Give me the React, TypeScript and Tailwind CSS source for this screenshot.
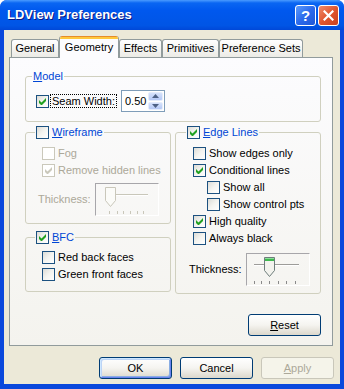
import type { ReactNode } from "react";

function Check({ checked = false, disabled = false }: { checked?: boolean; disabled?: boolean }) {
  return (
    <span
      className={
        disabled
          ? "flex h-[13px] w-[13px] shrink-0 items-center justify-center border border-[#CAC8BB] bg-white"
          : "flex h-[13px] w-[13px] shrink-0 items-center justify-center border border-[#1C5180] bg-gradient-to-br from-[#DCDCD7] via-[#F4F4F0] to-white"
      }
    >
      {checked && (
        <svg width="7" height="7" viewBox="0 0 7 7">
          <path d="M0 2v3l2 2h1l4-4V0L2.5 4.5Z" fill={disabled ? "#CAC8BB" : "#21A121"} />
        </svg>
      )}
    </span>
  );
}

function CheckRow({
  label,
  checked,
  disabled,
  indent,
}: {
  label: ReactNode;
  checked?: boolean;
  disabled?: boolean;
  indent?: boolean;
}) {
  return (
    <div className={`flex h-[17px] items-center gap-[3px] ${indent ? "pl-[14px]" : ""}`}>
      <Check checked={checked} disabled={disabled} />
      <span className={disabled ? "text-[#ACA899]" : ""}>{label}</span>
    </div>
  );
}

function CheckLegend({ label, checked }: { label: ReactNode; checked?: boolean }) {
  return (
    <span className="flex h-[13px] items-center gap-[3px]">
      <Check checked={checked} />
      <span className="text-[#0046D5]">{label}</span>
    </span>
  );
}

// trackbar drawn inside a sunken frame
function Slider({ disabled, thumb, ticks, track }: { disabled?: boolean; thumb: number; ticks: number[]; track: [number, number] }) {
  const line = disabled ? "#C9C7BA" : "#9D9C99";
  const edge = disabled ? "#C9C7BA" : "#6E7D7B";
  return (
    <div className="h-[33px] w-[64px] border border-[#A7A6AA] border-r-white border-b-white">
      <svg width="62" height="31" viewBox="0 0 62 31">
        <line x1={track[0]} y1="10.5" x2={track[1]} y2="10.5" stroke={line} />
        <line x1={track[0]} y1="11.5" x2={track[1]} y2="11.5" stroke="#FFFFFF" />
        {ticks.map((t) => (
          <line key={t} x1={t + 0.5} y1="27" x2={t + 0.5} y2="30" stroke={disabled ? "#C9C7BA" : "#8A8A8A"} />
        ))}
        <path
          d={`M${thumb + 0.5} 3.5h10v13l-5 6l-5-6z`}
          fill={disabled ? "#FBFBF8" : "#F3F3EE"}
          stroke={edge}
        />
        {!disabled && <rect x={thumb + 1} y="4" width="9" height="3" fill="#3FB94F" />}
        {!disabled && <rect x={thumb + 1} y="4" width="9" height="1" fill="#8BE19A" />}
      </svg>
    </div>
  );
}

function XpButton({ children, primary, disabled }: { children: ReactNode; primary?: boolean; disabled?: boolean }) {
  if (disabled) {
    return (
      <div className="flex h-[22px] w-[73px] items-center justify-center rounded-[3px] border border-[#C9C7BA] bg-[#F5F4EA] text-[#ACA899]">
        {children}
      </div>
    );
  }
  return (
    <div
      className={`flex h-[22px] w-[73px] items-center justify-center rounded-[3px] border border-[#003C74] bg-gradient-to-b from-white via-[#F5F4F0] to-[#DCD8CC] ${
        primary ? "shadow-[inset_1px_1px_0_#CEE7FF,inset_-1px_-1px_0_#6982EE,inset_2px_2px_0_#BCD4F6,inset_-2px_-2px_0_#89ADE4]" : ""
      }`}
    >
      {children}
    </div>
  );
}

const tabs = [
  { name: "General", w: "w-[48px]" },
  { name: "Geometry", w: "w-[60px]" },
  { name: "Effects", w: "w-[43px]" },
  { name: "Primitives", w: "w-[57px]" },
  { name: "Preference Sets", w: "w-[84px]" },
];

export default function App() {
  return (
    <div className="flex h-[389px] w-[344px] flex-col overflow-hidden rounded-t-[7px] bg-[#0A48DC] font-['Liberation_Sans',Arial,sans-serif] text-[11px] leading-[13px] text-black">
      {/* title bar */}
      <div className="flex h-[30px] shrink-0 items-center bg-[linear-gradient(to_bottom,#4A9BFF_0%,#0A66F2_10%,#0058EE_35%,#0055E5_85%,#0048D8_100%)] pl-[7px] pr-[5px]">
        <span className="text-[13px] font-bold leading-[16px] text-white [text-shadow:1px_1px_0_#0A1883]">
          LDView Preferences
        </span>
        <div className="ml-auto flex gap-[2px]">
          <div className="flex h-[21px] w-[21px] items-center justify-center rounded-[3px] border border-white bg-gradient-to-br from-[#5C9AFB] via-[#2C6AEC] to-[#1E56D6] text-[15px] font-bold text-white">
            ?
          </div>
          <div className="flex h-[21px] w-[21px] items-center justify-center rounded-[3px] border border-white bg-gradient-to-br from-[#EE8A6A] via-[#E0562F] to-[#C9401E]">
            <svg width="11" height="11" viewBox="0 0 11 11">
              <path d="M1.5 1.5l8 8M9.5 1.5l-8 8" stroke="#FFFFFF" strokeWidth="2.2" strokeLinecap="square" />
            </svg>
          </div>
        </div>
      </div>

      {/* client area */}
      <div className="mx-[4px] mb-[5px] flex flex-1 flex-col bg-[#ECE9D8] pt-[6px]">
        <div className="ml-[5px] flex h-[21px] items-end pl-[2px]">
          {tabs.map((t) =>
            t.name === "Geometry" ? (
              <div
                key={t.name}
                className={`relative z-10 -mb-px flex h-[22px] ${t.w} flex-col overflow-hidden rounded-t-[3px] border-x border-[#919B9C] bg-[#FCFCFE]`}
              >
                <div className="h-px bg-[#E68B2C]" />
                <div className="h-[2px] bg-[#FFC83C]" />
                <div className="flex flex-1 items-center justify-center pb-[3px]">{t.name}</div>
              </div>
            ) : (
              <div
                key={t.name}
                className={`flex h-[18px] ${t.w} items-center justify-center rounded-t-[3px] border border-b-0 border-[#919B9C] bg-gradient-to-b from-white to-[#ECEBE6]`}
              >
                {t.name}
              </div>
            ),
          )}
        </div>

        <div className="ml-[5px] flex h-[289px] w-[324px] flex-col border border-[#919B9C] bg-gradient-to-b from-[#FCFCFE] to-[#F4F3EE] pl-[15px]">
          <div className="flex w-[296px] flex-col">
            <fieldset className="mt-[12px] rounded-[3px] border border-[#D0D0BF]">
              <legend className="ml-[6px] px-[1px] text-[#0046D5]">
                <span className="underline">M</span>odel
              </legend>
              <div className="mt-[7px] mb-[9px] flex h-[22px] items-center pl-[10px]">
                <Check checked />
                <span className="ml-[1px] border border-dotted border-black px-[1px] leading-[12px]">Seam Width:</span>
                <div className="ml-[4px] flex h-[22px] w-[44px] border border-[#7F9DB9] bg-white">
                  <span className="flex items-center pl-[3px]">0.50</span>
                  <div className="my-px mr-px ml-auto flex w-[15px] flex-col gap-px">
                    <div className="flex flex-1 items-center justify-center rounded-[2px] border border-[#E4ECFB] bg-gradient-to-b from-[#D6E2FB] to-[#B4C8F6]">
                      <svg width="7" height="4" viewBox="0 0 7 4">
                        <path d="M0 4L3.5 0L7 4Z" fill="#4D6185" />
                      </svg>
                    </div>
                    <div className="flex flex-1 items-center justify-center rounded-[2px] border border-[#E4ECFB] bg-gradient-to-b from-[#D6E2FB] to-[#B4C8F6]">
                      <svg width="7" height="4" viewBox="0 0 7 4">
                        <path d="M0 0L3.5 4L7 0Z" fill="#4D6185" />
                      </svg>
                    </div>
                  </div>
                </div>
              </div>
            </fieldset>

            <div className="mt-[4px] flex gap-[4px]">
              <div className="flex w-[146px] flex-col">
                <fieldset className="rounded-[3px] border border-[#D0D0BF]">
                  <legend className="ml-[9px] px-[1px]">
                    <CheckLegend
                      label={
                        <>
                          <span className="underline">W</span>ireframe
                        </>
                      }
                    />
                  </legend>
                  <div className="pb-[7px] pl-[16px]">
                    <div className="pt-[6px]">
                      <CheckRow label="Fog" disabled />
                      <CheckRow label="Remove hidden lines" disabled checked />
                    </div>
                    <div className="mt-[4px] -ml-[4px] flex items-center">
                      <span className="w-[57px] text-[#ACA899]">Thickness:</span>
                      <Slider disabled thumb={9} track={[9, 52]} ticks={[13, 21, 27, 34, 41, 47]} />
                    </div>
                  </div>
                </fieldset>

                <fieldset className="mt-[7px] rounded-[3px] border border-[#D0D0BF]">
                  <legend className="ml-[9px] px-[1px]">
                    <CheckLegend
                      checked
                      label={
                        <>
                          <span className="underline">B</span>FC
                        </>
                      }
                    />
                  </legend>
                  <div className="pt-[5px] pb-[8px] pl-[16px]">
                    <CheckRow label="Red back faces" />
                    <CheckRow label="Green front faces" />
                  </div>
                </fieldset>
              </div>

              <fieldset className="w-[146px] rounded-[3px] border border-[#D0D0BF]">
                <legend className="ml-[10px] px-[1px]">
                  <CheckLegend
                    checked
                    label={
                      <>
                        <span className="underline">E</span>dge Lines
                      </>
                    }
                  />
                </legend>
                <div className="pb-[7px] pl-[17px]">
                  <div className="pt-[6px]">
                    <CheckRow label="Show edges only" />
                    <CheckRow label="Conditional lines" checked />
                    <CheckRow label="Show all" indent />
                    <CheckRow label="Show control pts" indent />
                    <CheckRow label="High quality" checked />
                    <CheckRow label="Always black" />
                  </div>
                  <div className="mt-[6px] -ml-[4px] flex items-center">
                    <span className="w-[57px]">Thickness:</span>
                    <Slider thumb={17} track={[7, 52]} ticks={[7, 14, 22, 31, 39, 48]} />
                  </div>
                </div>
              </fieldset>
            </div>

            <div className="mt-[20px] self-end">
              <XpButton>
                <span className="underline">R</span>eset
              </XpButton>
            </div>
          </div>
        </div>

        <div className="mt-[11px] flex justify-end gap-[8px] pr-[6px]">
          <XpButton primary>OK</XpButton>
          <XpButton>Cancel</XpButton>
          <XpButton disabled>
            <span className="underline">A</span>pply
          </XpButton>
        </div>
      </div>
    </div>
  );
}
